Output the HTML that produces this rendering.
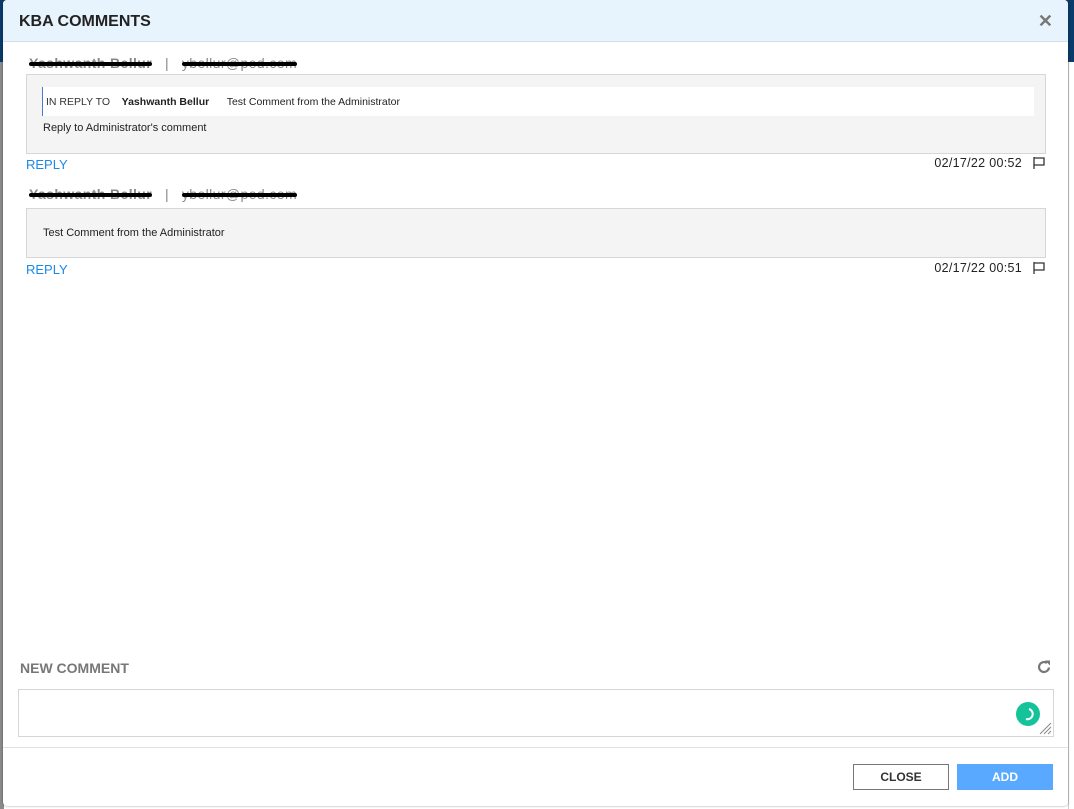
<!DOCTYPE html>
<html><head><meta charset="utf-8"><style>
*{box-sizing:border-box;margin:0;padding:0}
body{width:1074px;height:809px;overflow:hidden;background:#fff;font-family:"Liberation Sans",Arial,sans-serif;position:relative}
.bgtop{position:absolute;left:0;top:0;width:1074px;height:62px;background:#0b3b6b}
.bgleft{position:absolute;left:0;top:62px;width:4px;height:747px;background:#8a8a8a}
.bgright{position:absolute;left:1068px;top:62px;width:6px;height:747px;background:#fff;border-left:1px solid #ccc}
.modal{position:absolute;left:3px;top:0;width:1065px;height:806px;background:#fff;border-radius:4px;overflow:hidden;box-shadow:0 0 2px rgba(0,0,0,.4)}
.hdr{height:42px;background:#e8f4fd;border-bottom:1px solid #d8dde2;position:relative}
.hdr h1{position:absolute;left:16px;top:13px;font-size:16px;font-weight:bold;color:#222}
.x{position:absolute;right:15px;top:11px;font-size:18px;font-weight:bold;color:#777}
.meta{position:absolute;font-size:14px;color:#888;letter-spacing:.4px}
.strike{position:relative;display:inline-block}
.strike:after{content:"";position:absolute;left:0;right:0;top:7px;height:4px;background:#000;border-radius:2px}
.box{position:absolute;left:23px;width:1020px;background:#f4f4f4;border:1px solid #d6d6d6}
.txt{font-size:11px;color:#222}
.reply{position:absolute;left:23px;font-size:13px;color:#1a8ae6}
.date{position:absolute;right:46px;font-size:12.5px;color:#222;letter-spacing:.3px}
.flag{position:absolute;right:22px}
.btn{position:absolute;top:764px;height:26px;font-size:12px;font-weight:bold;text-align:center;line-height:24px}
</style></head><body>
<div class="bgtop"></div><div class="bgleft"></div><div class="bgright"></div>
<div class="modal">
<div class="hdr"><h1>KBA COMMENTS</h1><span class="x">✕</span></div>

<div class="meta" style="left:26px;top:55px"><span class="strike" style="font-weight:bold">Yashwanth Bellur</span>&nbsp;&nbsp;&nbsp;|&nbsp;&nbsp;&nbsp;<span class="strike">ybellur@ped.com</span></div>
<div class="box" style="top:74px;height:80px">
 <div style="position:absolute;left:15px;top:12px;width:992px;height:29px;background:#fff;border-left:1px solid #4a7bd0"></div>
 <div class="txt" style="position:absolute;left:19px;top:21px;font-size:10.5px"><span style="color:#333">IN REPLY TO</span>&nbsp;&nbsp;&nbsp;&nbsp;<b>Yashwanth Bellur</b>&nbsp;&nbsp;&nbsp;&nbsp;&nbsp;&nbsp;Test Comment from the Administrator</div>
 <div class="txt" style="position:absolute;left:16px;top:47px">Reply to Administrator's comment</div>
</div>
<div class="reply" style="top:157px">REPLY</div>
<div class="date" style="top:156px">02/17/22 00:52</div>
<svg class="flag" style="top:156px" width="14" height="14" viewBox="0 0 14 14"><path d="M2 1v12M2 2h10v7H2" fill="none" stroke="#333" stroke-width="1.3"/></svg>

<div class="meta" style="left:26px;top:186px"><span class="strike" style="font-weight:bold">Yashwanth Bellur</span>&nbsp;&nbsp;&nbsp;|&nbsp;&nbsp;&nbsp;<span class="strike">ybellur@ped.com</span></div>
<div class="box" style="top:208px;height:50px"><div class="txt" style="position:absolute;left:16px;top:18px">Test Comment from the Administrator</div></div>
<div class="reply" style="top:262px">REPLY</div>
<div class="date" style="top:261px">02/17/22 00:51</div>
<svg class="flag" style="top:261px" width="14" height="14" viewBox="0 0 14 14"><path d="M2 1v12M2 2h10v7H2" fill="none" stroke="#333" stroke-width="1.3"/></svg>

<div style="position:absolute;left:17px;top:660px;font-size:14px;font-weight:bold;color:#777">NEW COMMENT</div>
<svg style="position:absolute;left:1033px;top:659px" width="16" height="16" viewBox="0 0 16 16"><path d="M13 8.5A5 5 0 1 1 11 4" fill="none" stroke="#777" stroke-width="2.2"/><path d="M9 1.5h5v5z" fill="#777"/></svg>
<div style="position:absolute;left:15px;top:689px;width:1036px;height:48px;border:1px solid #d6d6d6;background:#fff">
 <div style="position:absolute;right:13px;top:12px;width:24px;height:24px;border-radius:50%;background:#15c39a"></div>
 <svg style="position:absolute;right:13px;top:12px" width="24" height="24" viewBox="0 0 24 24"><path d="M13 7A5 5 0 0 1 10 17" fill="none" stroke="#fff" stroke-width="2"/></svg>
 <svg style="position:absolute;right:1px;bottom:1px" width="14" height="14" viewBox="0 0 14 14"><path d="M13 2L2 13M13 6L6 13M13 10L10 13" stroke="#888" stroke-width="1"/></svg>
</div>
<div style="position:absolute;left:0;top:747px;width:1065px;border-top:1px solid #e2e2e2"></div>
<div class="btn" style="left:850px;width:96px;border:1px solid #777;color:#333;background:#fff">CLOSE</div>
<div class="btn" style="left:954px;width:96px;background:#58a9ff;color:#fff;line-height:26px">ADD</div>
</div>
</body></html>
